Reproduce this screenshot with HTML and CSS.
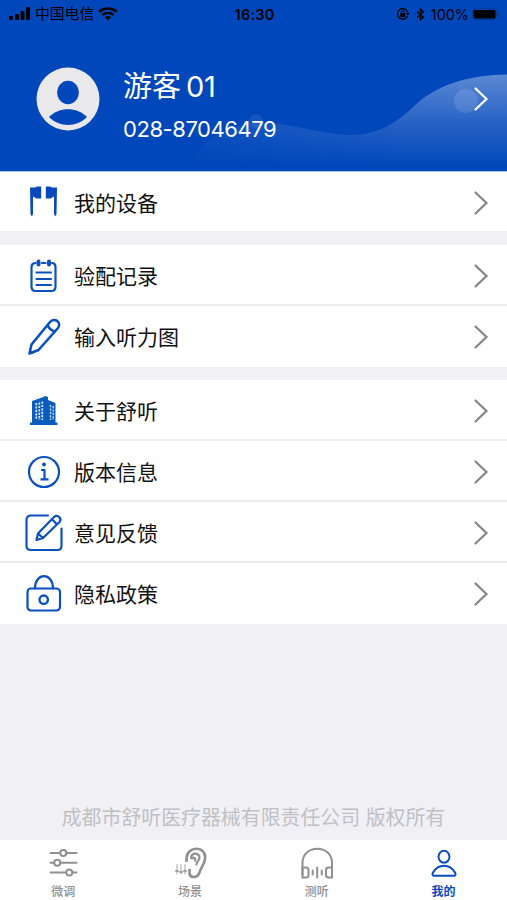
FILE: index.html
```html
<!DOCTYPE html>
<html lang="zh-CN">
<head>
  <meta charset="UTF-8" />
  <meta name="viewport" content="width=device-width, initial-scale=1.0"/>
  <title>我的</title>
  <link rel="stylesheet" href="styles.css">
</head>
<body>
  <!-- shared arrow -->
  <svg class="defs" width="0" height="0">
    <symbol id="arrow" viewBox="0 0 16 26">
      <path d="M2.500 2.500 L13.500 13 L2.500 23.500" fill="none" stroke="currentColor" stroke-width="2.200" stroke-linecap="round"/>
    </symbol>
  </svg>

  <header class="header">
    <svg class="wave" viewBox="0 0 507 171" preserveAspectRatio="none">
      <defs>
        <linearGradient id="waveFill" x1="0" y1="74" x2="0" y2="168" gradientUnits="userSpaceOnUse">
          <stop offset="0" stop-color="#fff" stop-opacity="0.36"/>
          <stop offset="0.5" stop-color="#fff" stop-opacity="0.16"/>
          <stop offset="1" stop-color="#fff" stop-opacity="0"/>
        </linearGradient>
        <linearGradient id="waveFade" x1="185" y1="0" x2="400" y2="0" gradientUnits="userSpaceOnUse">
          <stop offset="0" stop-color="#fff" stop-opacity="0.3"/>
          <stop offset="1" stop-color="#fff"/>
        </linearGradient>
        <mask id="waveMask" maskUnits="userSpaceOnUse" x="0" y="0" width="507" height="171">
          <rect width="507" height="171" fill="url(#waveFade)"/>
        </mask>
      </defs>
      <path d="M188 165 C205 140 225 123 265 123 C300 125 325 135 353 135 C377 134.500 395 124 412 108 C436 84 470 75 507 74.500 V171 H188 Z" fill="url(#waveFill)" mask="url(#waveMask)"/>
      <circle cx="256" cy="121" r="7" fill="#fff" opacity="0.08"/>
      <circle cx="466" cy="101" r="12" fill="#fff" opacity="0.12"/>
    </svg>

    <div class="status-bar">
      <div class="status-left">
        <svg width="22" height="14" viewBox="0 0 22 14">
          <rect x="0" y="9" width="4" height="4" rx="1"/>
          <rect x="6" y="7" width="4" height="6" rx="1"/>
          <rect x="11.500" y="4" width="4" height="9" rx="1"/>
          <rect x="17" y="0" width="4" height="13" rx="1"/>
        </svg>
        <span class="carrier">中国电信</span>
        <svg width="20" height="14" viewBox="0 0 18 14" preserveAspectRatio="none">
          <path d="M1 4.800 C5.500 0.400 12.500 0.400 17 4.800" fill="none" stroke="#000" stroke-width="2.600"/>
          <path d="M4 8 C7 5.200 11 5.200 14 8" fill="none" stroke="#000" stroke-width="2.400"/>
          <path d="M6.200 10.300 C8 8.700 10 8.700 11.800 10.300 L9 13.200 Z"/>
        </svg>
      </div>
      <div class="status-time">16:30</div>
      <div class="status-right">
        <svg width="14" height="14" viewBox="0 0 14 14">
          <path d="M11.700 8.800 A5.300 5.300 0 1 1 11.800 5.300" fill="none" stroke="#000" stroke-width="1.300"/>
          <path d="M9.800 6 H13.800 L11.800 8.800 Z"/>
          <rect x="4.200" y="6.200" width="5" height="3.700" rx="0.500"/>
          <path d="M5.200 6.500 V5.300 A1.500 1.500 0 0 1 8.200 5.300 V6.500" fill="none" stroke="#000"/>
        </svg>
        <svg class="bluetooth" width="9" height="13" viewBox="0 0 9 13">
          <path d="M1 3.500 L7.400 9.200 L4.400 11.800 V1.200 L7.400 3.800 L1 9.500" fill="none" stroke="#000" stroke-width="1.300"/>
        </svg>
        <span class="percent">100%</span>
        <svg width="28" height="12" viewBox="0 0 28 12">
          <rect x="0.500" y="0.500" width="24" height="11" rx="3" fill="none" stroke="#000" stroke-opacity="0.2"/>
          <rect x="1.500" y="2" width="22" height="8.500" rx="1.500"/>
          <path d="M26 4 Q29 6 26 8 Z" opacity="0.3"/>
        </svg>
      </div>
    </div>

    <div class="profile">
      <svg class="avatar" width="64" height="64" viewBox="0 0 64 64">
        <circle cx="32" cy="32" r="31.500" fill="#e9e9eb"/>
        <ellipse cx="32" cy="25.500" rx="10.800" ry="11.800" fill="#0047bb"/>
        <path d="M13 50 C23 39.500 41 39.500 51 50 C41 60.500 23 60.500 13 50 Z" fill="#0047bb"/>
      </svg>
      <div class="profile-info">
        <div class="name">游客<span class="name-number">01</span></div>
        <div class="phone">028-87046479</div>
      </div>
      <svg class="arrow" width="16" height="26"><use href="#arrow"/></svg>
    </div>
  </header>

  <main class="menu">
    <section class="group group-device">
      <a class="row">
        <svg class="icon" width="40" height="40" viewBox="0 0 40 40">
          <path d="M6 4.500 H11 L13 3.500 H17.200 V15.500 H12.500 L9 13.500 V31 L7.800 33.500 L6.500 31 Z" fill="#0849bd"/>
          <path d="M33 4.500 H28 L26 3.500 H21.800 V15.500 H26.500 L30 13.500 V31 L31.200 33.500 L32.500 31 Z" fill="#0849bd"/>
        </svg>
        <span class="label">我的设备</span>
        <svg class="arrow" width="16" height="26"><use href="#arrow"/></svg>
      </a>
    </section>

    <section class="group">
      <a class="row">
        <svg class="icon line" width="40" height="40" viewBox="0 0 40 40">
          <path d="M11.500 7 H11 Q7.500 7.500 7.500 11 V30.500 Q7.500 35 11.500 35 H27.500 Q31.500 35 31.500 30.500 V11 Q31.500 7.500 28.500 7 H28 M18 7 H21.500"/>
          <path d="M12.500 16.500 H27 M12.500 23 H27 M12.500 29 H27" stroke-width="2.200"/>
          <path d="M14.500 5.500 V8.500 M25 5.500 V8.500" stroke-width="4"/>
        </svg>
        <span class="label">验配记录</span>
        <svg class="arrow" width="16" height="26"><use href="#arrow"/></svg>
      </a>
      <a class="row">
        <svg class="icon line" width="40" height="40" viewBox="0 0 40 40">
          <path d="M5.500 36.500 L7.500 27.500 L26 5 C30.500 0 38 5.500 34 11 L14.500 33 Z M23.500 8 C25 11.500 27.500 13.800 31 14.500" stroke-width="2.600"/>
          <path d="M6 35 L9 35.500" stroke-width="2"/>
        </svg>
        <span class="label">输入听力图</span>
        <svg class="arrow" width="16" height="26"><use href="#arrow"/></svg>
      </a>
    </section>

    <section class="group">
      <a class="row">
        <svg class="icon" width="40" height="40" viewBox="0 0 40 40">
          <path d="M8 10 L18 6.500 L21.500 5 L24 6 V9 L31.500 12 V31.500 H33.500 V34 H6 V31.500 H8 Z" fill="#0b5dbd"/>
          <path d="M12.300 12 V29 M15.300 11.500 V29 M18.300 10.500 V29" stroke="#fff" stroke-width="1.700" stroke-dasharray="2.200 1.200" opacity="0.85"/>
          <path d="M26.500 14 V29 M29.200 15 V29" stroke="#fff" stroke-width="1.400" stroke-dasharray="2.200 1.200" opacity="0.75"/>
        </svg>
        <span class="label">关于舒听</span>
        <svg class="arrow" width="16" height="26"><use href="#arrow"/></svg>
      </a>
      <a class="row">
        <svg class="icon line" width="40" height="40" viewBox="0 0 40 40">
          <circle cx="20" cy="20" r="15"/>
          <circle cx="20" cy="12.500" r="2" fill="#0b51bd" stroke="none"/>
          <path d="M17 18 H20.500 V27 M16.500 27.300 H24.500" stroke-linecap="butt"/>
        </svg>
        <span class="label">版本信息</span>
        <svg class="arrow" width="16" height="26"><use href="#arrow"/></svg>
      </a>
      <a class="row">
        <svg class="icon line" width="40" height="40" viewBox="0 0 40 40">
          <path d="M24 2.500 H7 Q2.500 2.500 2.500 7 V33 Q2.500 37 7 37 H33.500 Q37.500 37 37.500 33 V15.500"/>
          <path d="M12.500 27 L14 20.500 L30 4 C33.500 1 38.500 5.500 35.500 9 L19 25 Z M28 6 L33 11.500 M14 20.500 L19 25"/>
        </svg>
        <span class="label">意见反馈</span>
        <svg class="arrow" width="16" height="26"><use href="#arrow"/></svg>
      </a>
      <a class="row">
        <svg class="icon line" width="40" height="40" viewBox="0 0 40 40">
          <path d="M11 14.500 C11 -2 29 -2 29 14.500"/>
          <rect x="3.500" y="14.500" width="32.500" height="22" rx="3.500"/>
          <circle cx="19.700" cy="25.700" r="4.200" stroke-width="2.400"/>
        </svg>
        <span class="label">隐私政策</span>
        <svg class="arrow" width="16" height="26"><use href="#arrow"/></svg>
      </a>
    </section>
  </main>

  <footer class="copyright">成都市舒听医疗器械有限责任公司 版权所有</footer>

  <nav class="tabs">
    <a class="tab">
      <svg width="34" height="34" viewBox="0 0 34 34">
        <path d="M4.500 6 H14 M20.500 6 H30.500 M4.500 15.800 H8 M14.500 15.800 H30.500 M4.500 25.500 H20 M26.500 25.500 H30.500"/>
        <circle cx="17.300" cy="6" r="3"/>
        <circle cx="11.200" cy="15.800" r="3"/>
        <circle cx="23.300" cy="25.500" r="3"/>
      </svg>
      <span>微调</span>
    </a>
    <a class="tab">
      <svg width="34" height="34" viewBox="0 0 34 34">
        <path d="M13.500 15 V12 C13.500 -2 34 -1.500 32 12 C31.500 17 28.500 19.500 26.500 25.500 C24.500 31.800 17 31 16.500 26.500 V22" stroke-width="2.600" stroke-linecap="butt"/>
        <path d="M18 11 C18 5 27 5.500 26.500 11 C26.300 13.500 23.500 14 23.500 17.500 M19 11.500 C21 9.500 23 11 22 13.500" stroke-width="2.200"/>
        <path d="M4 17.500 V27 M8 17.500 V27 M12 17.500 V27" stroke-width="1" opacity="0.8"/>
        <path d="M3 24 H5 M7 25 H9 M11 24 H13" stroke-width="2" opacity="0.8"/>
      </svg>
      <span>场景</span>
    </a>
    <a class="tab">
      <svg width="34" height="34" viewBox="0 0 34 34">
        <path d="M2.500 28 V16 C2.500 -3 32 -3 32 16 V28"/>
        <path d="M2.500 20.500 H6 Q8.500 20.500 8.500 23 V28 Q8.500 30.500 6 30.500 H2.500 Z M32 20.500 H28.500 Q26 20.500 26 23 V28 Q26 30.500 28.500 30.500 H32 Z"/>
        <path d="M12.700 23.500 V27.500 M17.200 20.500 V30.500 M21.800 23.500 V27.500"/>
      </svg>
      <span>测听</span>
    </a>
    <a class="tab active">
      <svg width="34" height="34" viewBox="0 0 34 34">
        <ellipse cx="17" cy="9.800" rx="5.500" ry="6"/>
        <path d="M7 28.800 H27 Q29.500 28.500 28 25.500 C22.500 16.500 11.500 16.500 6 25.500 Q4.500 28.500 7 28.800 Z"/>
      </svg>
      <span>我的</span>
    </a>
  </nav>
</body>
</html>
```
FILE: styles.css
```css
* {
  box-sizing: border-box;
}

body {
  margin: 0;
  height: 100vh;
  display: flex;
  flex-direction: column;
  background: #f0f0f5;
  color: #111;
  font-family: Inter, "Noto Sans CJK SC", sans-serif;
}

svg {
  display: block;
  flex-shrink: 0;
}

.defs {
  position: absolute;
}

/* header */
.header {
  position: relative;
  height: 172px;
  background: #0047bb;
  border-bottom: 1px solid #a9c4f2;
}

.wave {
  position: absolute;
  top: 0;
  left: 0;
  width: 100%;
  height: 171px;
}

.status-bar {
  position: relative;
  height: 28px;
  padding: 0 7px 0 9px;
  display: grid;
  grid-template-columns: 1fr auto 1fr;
  align-items: center;
  color: #000;
}

.status-left,
.status-right {
  display: flex;
  align-items: center;
}

.status-left {
  gap: 4px;
}

.carrier {
  padding-top: 1px;
  font-size: 14.8px;
  line-height: 27px;
}

.status-time {
  font-size: 14.5px;
  font-weight: 600;
  letter-spacing: 0.2px;
}

.status-right {
  justify-content: flex-end;
}

.bluetooth {
  margin-left: 6px;
}

.percent {
  margin: 0 3px 0 6px;
  font-size: 14.4px;
}

.profile {
  position: relative;
  display: flex;
  align-items: flex-start;
  padding: 38px 18px 0 36px;
  color: #fff;
}

.profile .arrow {
  margin-top: 20px;
}

.profile .avatar {
  margin-top: 1px;
}

.profile-info {
  flex: 1;
  margin-left: 23px;
  padding-top: 1px;
}

.name {
  font-size: 29px;
  line-height: 40px;
}

.name-number {
  margin-left: 5px;
  font-size: 29px;
  letter-spacing: -0.2px;
}

.phone {
  font-size: 22px;
  line-height: 28px;
  margin-top: 8px;
  letter-spacing: -0.45px;
}

/* menu */
.menu {
  flex: 1;
}

.group {
  background: #fff;
  margin-bottom: 13px;
}

.group-device {
  height: 59px;
  margin-bottom: 14px;
}

.row {
  height: 61px;
  display: flex;
  align-items: center;
  padding: 3px 18px 0 24px;
  border-bottom: 2px solid #ededf0;
}

.row:last-child {
  padding-top: 1px;
  border-bottom: none;
}

.line {
  fill: none;
  stroke: #0b51bd;
  stroke-width: 2.2;
  stroke-linecap: round;
  stroke-linejoin: round;
}

.label {
  flex: 1;
  margin-left: 10px;
  padding-top: 2px;
  font-size: 21px;
  line-height: 30px;
}

.row .arrow {
  color: #858585;
}

.copyright {
  height: 46px;
  padding-top: 1px;
  color: #c0c0c4;
  font-size: 19.9px;
  line-height: 46px;
  text-align: center;
}

/* bottom tabs */
.tabs {
  height: 60px;
  display: flex;
  background: #fff;
}

.tab {
  flex: 1;
  display: flex;
  flex-direction: column;
  align-items: center;
  padding-top: 7px;
  color: #909090;
  font-size: 12px;
  font-weight: 500;
  line-height: 18px;
}

.tab svg {
  fill: none;
  stroke: currentColor;
  stroke-width: 2;
  stroke-linecap: round;
}

.tab span {
  margin-top: 2px;
}

.tab.active {
  color: #0b4bbb;
  font-weight: 700;
}
```
